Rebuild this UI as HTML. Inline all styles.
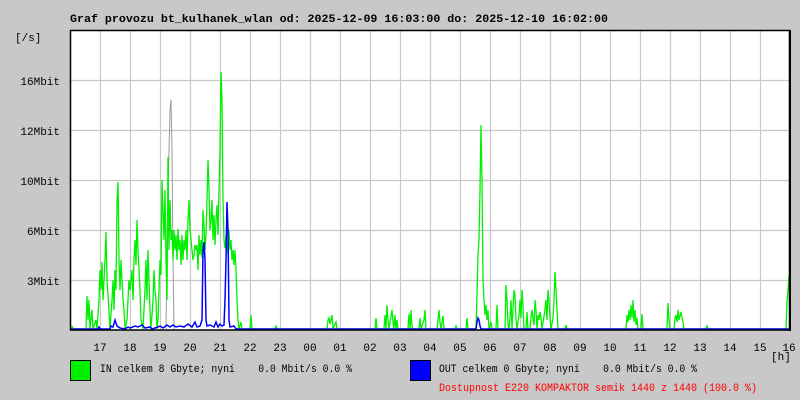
<!DOCTYPE html>
<html><head><meta charset="utf-8"><style>
html,body{margin:0;padding:0;background:#c8c8c8;width:800px;height:400px;overflow:hidden}
svg{display:block}
text{font-family:"Liberation Mono","DejaVu Sans Mono",monospace;font-size:11px;white-space:pre}
</style></head><body>
<svg width="800" height="400" xmlns="http://www.w3.org/2000/svg">
<rect x="0" y="0" width="800" height="400" fill="#c8c8c8"/>
<text x="70" y="22" font-weight="bold" font-size="12" fill="#000" textLength="538" lengthAdjust="spacingAndGlyphs">Graf provozu bt_kulhanek_wlan od: 2025-12-09 16:03:00 do: 2025-12-10 16:02:00</text>
<text x="15" y="41" fill="#000">[/s]</text>
<rect x="70" y="30" width="720" height="300" fill="#fff"/>
<g stroke="#c8c8c8" stroke-width="1.2">
<path d="M100.5 30V330M130.5 30V330M160.5 30V330M190.5 30V330M220.5 30V330M250.5 30V330M280.5 30V330M310.5 30V330M340.5 30V330M370.5 30V330M400.5 30V330M430.5 30V330M460.5 30V330M490.5 30V330M520.5 30V330M550.5 30V330M580.5 30V330M610.5 30V330M640.5 30V330M670.5 30V330M700.5 30V330M730.5 30V330M760.5 30V330"/>
<path d="M70 80.5H790M70 130.5H790M70 180.5H790M70 230.5H790M70 280.5H790"/>
</g>
<g fill="#000" text-anchor="end">
<text x="60" y="85">16Mbit</text>
<text x="60" y="135">12Mbit</text>
<text x="60" y="185">10Mbit</text>
<text x="60" y="235">6Mbit</text>
<text x="60" y="285">3Mbit</text>
</g>
<polyline fill="none" stroke="#999" stroke-width="1" points="166,329 167,250 168,200 169,150 170,110 171,100 172,150 173,260 174,329"/>
<polyline fill="none" stroke="#00f000" stroke-width="1.3" points="70,329 72,329 72,326 73,329 86,329 87,296 88,320 89,300 90,329 92,310 93,329 96,320 97,329 99,300 100,270 101,290 102,262 103,300 104,280 105,260 106,232 107,280 108,295 110,329 112,300 113,280 114,310 115,270 116,290 117,200 118,182 119,260 120,290 121,260 122,280 123,300 124,310 125,329 127,320 128,300 129,280 130,290 132,270 133,300 134,260 135,240 136,265 137,220 138,250 139,270 140,290 141,320 143,329 145,290 146,260 147,300 148,250 149,280 150,310 151,329 153,300 154,270 155,290 156,300 157,329 158,320 159,290 160,260 161,275 162,180 163,210 164,240 165,190 166,260 167,300 168,157 169,250 170,200 171,240 172,230 173,260 174,230 175,250 176,235 177,260 178,229 179,250 180,240 181,265 182,235 183,260 184,240 185,250 186,230 187,260 188,220 189,200 190,230 191,240 192,250 193,260 194,255 195,245 196,250 197,245 198,270 199,235 200,255 201,240 202,258 203,210 204,225 205,250 206,235 207,200 208,160 209,190 210,230 211,220 212,200 213,240 214,215 215,245 216,220 217,205 218,235 219,190 220,150 221,72 222,100 223,200 224,240 225,248 226,235 227,245 228,255 229,230 230,250 231,240 232,260 233,250 234,265 235,250 236,270 237,300 238,320 239,329 241,322 242,329 250,329 251,315 252,329 275,329 276,326 277,329 327,329 328,320 329,318 330,324 331,320 332,315 333,329 336,322 337,329 375,329 376,318 377,329 384,329 385,315 386,329 387,305 388,320 389,329 392,310 393,322 394,329 395,315 396,329 397,320 398,329 408,329 409,314 410,329 411,310 412,326 413,329 419,329 420,318 421,329 424,320 425,310 426,329 437,329 438,320 439,310 440,322 441,329 443,316 444,329 455,329 456,326 457,329 466,329 467,318 468,329 476,329 477,295 478,255 479,240 480,190 481,125 482,180 483,280 484,300 485,315 486,305 487,320 488,310 489,329 491,322 492,329 496,329 497,305 498,329 505,329 506,285 507,300 508,325 509,329 510,318 511,300 512,329 514,290 515,295 516,320 517,329 519,315 520,300 521,318 522,290 523,305 524,329 526,329 527,312 528,329 530,329 531,316 532,310 533,320 534,325 535,300 536,310 537,329 538,315 539,320 540,312 541,318 542,329 545,310 546,300 547,320 548,290 549,300 550,318 551,329 553,318 554,300 555,272 556,290 557,310 558,329 565,329 566,325 567,329 626,329 627,315 628,322 629,310 630,320 631,305 632,318 633,300 634,322 635,310 636,325 637,318 638,329 641,329 642,314 643,329 667,329 668,303 669,320 670,329 674,329 675,318 676,315 677,322 678,310 679,320 680,316 681,312 682,318 683,322 684,329 706,329 707,326 708,329 786,329 787,302 788,290 789,275 790,329"/>
<polyline fill="none" stroke="#0000ff" stroke-width="1.5" points="70,329 98,329 99,327 100,329 110,329 111,326 113,327 115,320 117,326 120,328 125,329 128,327 130,328 135,326 138,327 142,325 145,328 150,327 152,329 158,327 160,326 163,328 167,325 170,327 173,325 176,327 180,326 184,327 188,324 192,327 195,322 197,327 200,326 202,320 203,250 204,242 205,260 206,320 207,326 210,325 214,327 216,322 218,327 220,324 222,326 224,325 225,300 226,260 227,202 228,230 229,320 230,327 234,326 236,329 240,329 476,329 477,322 478,318 479,320 480,326 481,329 790,329"/>
<rect x="70.5" y="30.5" width="719" height="299.5" fill="none" stroke="#000" stroke-width="1.5"/>
<path d="M790 30V331" stroke="#000" stroke-width="2"/>
<g fill="#000" text-anchor="middle">
<text x="100" y="351">17</text><text x="130" y="351">18</text><text x="160" y="351">19</text><text x="190" y="351">20</text><text x="220" y="351">21</text><text x="250" y="351">22</text><text x="280" y="351">23</text><text x="310" y="351">00</text><text x="340" y="351">01</text><text x="370" y="351">02</text><text x="400" y="351">03</text><text x="430" y="351">04</text><text x="460" y="351">05</text><text x="490" y="351">06</text><text x="520" y="351">07</text><text x="550" y="351">08</text><text x="580" y="351">09</text><text x="610" y="351">10</text><text x="640" y="351">11</text><text x="670" y="351">12</text><text x="700" y="351">13</text><text x="730" y="351">14</text><text x="760" y="351">15</text><text x="789" y="351">16</text>
</g>
<text x="771" y="360" fill="#000">[h]</text>
<rect x="70.5" y="360.5" width="20" height="20" fill="#00f000" stroke="#000"/>
<text x="100" y="372" fill="#000" textLength="252" lengthAdjust="spacingAndGlyphs">IN celkem 8 Gbyte; nyní    0.0 Mbit/s 0.0 %</text>
<rect x="410.5" y="360.5" width="20" height="20" fill="#0000ff" stroke="#000"/>
<text x="439" y="372" fill="#000" textLength="258" lengthAdjust="spacingAndGlyphs">OUT celkem 0 Gbyte; nyní    0.0 Mbit/s 0.0 %</text>
<text x="439" y="391" fill="#ff0000" textLength="318" lengthAdjust="spacingAndGlyphs">Dostupnost E220 KOMPAKTOR semik 1440 z 1440 (100.0 %)</text>
</svg>
</body></html>
